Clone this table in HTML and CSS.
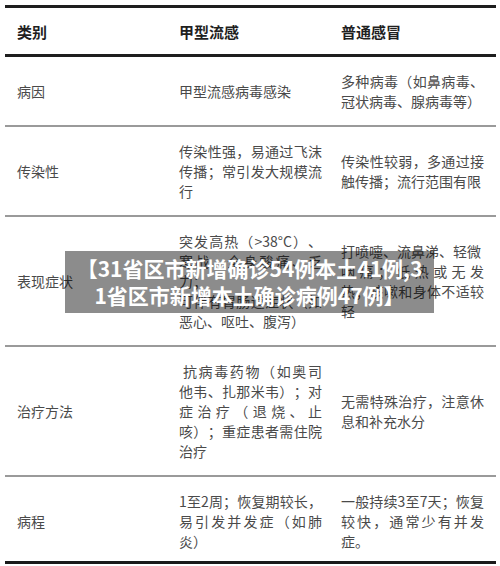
FILE: index.html
```html
<!DOCTYPE html>
<html lang="zh-CN">
<head>
<meta charset="utf-8">
<title>甲型流感与普通感冒</title>
<link rel="stylesheet" href="styles.css">
</head>
<body>
<div class="sheet">
  <div class="row head">
    <div class="cell c1">类别</div>
    <div class="cell c2">甲型流感</div>
    <div class="cell c3">普通感冒</div>
  </div>
  <div class="row">
    <div class="cell c1">病因</div>
    <div class="cell c2">甲型流感病毒感染</div>
    <div class="cell c3">多种病毒（如鼻病毒、冠状病毒、腺病毒等）</div>
  </div>
  <div class="row">
    <div class="cell c1">传染性</div>
    <div class="cell c2">传染性强，易通过飞沫传播；常引发大规模流行</div>
    <div class="cell c3">传染性较弱，多通过接触传播；流行范围有限</div>
  </div>
  <div class="row">
    <div class="cell c1">表现症状</div>
    <div class="cell c2">突发高热（&gt;38°C）、寒战、全身酸痛、乏力；<br>可伴有胃肠道症状（如恶心、呕吐、腹泻）</div>
    <div class="cell c3">打喷嚏、流鼻涕、轻微<span class="jline">咽痛；低热或无发</span>热；咳嗽和身体不适较轻</div>
  </div>
  <div class="row">
    <div class="cell c1">治疗方法</div>
    <div class="cell c2 indent">抗病毒药物（如奥司他韦、扎那米韦）；对症治疗（退烧、止咳）；重症患者需住院治疗</div>
    <div class="cell c3">无需特殊治疗，注意休息和补充水分</div>
  </div>
  <div class="row last">
    <div class="cell c1">病程</div>
    <div class="cell c2">1至2周；恢复期较长，易引发并发症（如肺炎）</div>
    <div class="cell c3">一般持续3至7天；恢复较快，通常少有并发症。</div>
  </div>
  <div class="banner">【31省区市新增确诊54例本土41例,3<br>1省区市新增本土确诊病例47例】</div>
</div>
</body>
</html>
```
FILE: styles.css
```css
html, body {
  margin: 0;
  padding: 0;
  background: #ffffff;
}

body {
  font-family: "Noto Sans CJK SC", "Noto Sans", sans-serif;
  color: #4a4a4a;
  font-size: 14px;
  line-height: 20px;
  text-spacing-trim: space-all;
}

.sheet {
  position: relative;
  margin: 5px 0 0 5px;
  width: 491px;
  border-top: 3px solid #1e1e1e;
  border-bottom: 3px solid #1a1a1a;
}

.row {
  display: grid;
  grid-template-columns: 162px 162px 167px;
  align-items: center;
  padding: 14px 0;
  border-bottom: 2px solid #9a9a9a;
}

.row.head {
  padding: 14px 0 12px;
  border-bottom: 3px solid #1e1e1e;
  font-size: 15px;
  font-weight: 700;
  color: #1f1f1f;
}

.row.last {
  border-bottom: none;
  padding-bottom: 10px;
}

.cell {
  padding-left: 12px;
}

.c2 {
  padding-right: 7px;
  text-align: justify;
}

.c3 {
  padding-right: 12px;
  text-align: justify;
}

.indent {
  text-indent: 4px;
}

.jline {
  display: block;
  text-align-last: justify;
}

.banner {
  position: absolute;
  left: 60px;
  top: 243px;
  width: 369px;
  height: 62px;
  box-sizing: border-box;
  padding-top: 4px;
  background: rgba(0, 0, 0, 0.45);
  color: #ffffff;
  font-size: 21px;
  line-height: 27px;
  font-weight: 700;
  text-align: center;
}
```
